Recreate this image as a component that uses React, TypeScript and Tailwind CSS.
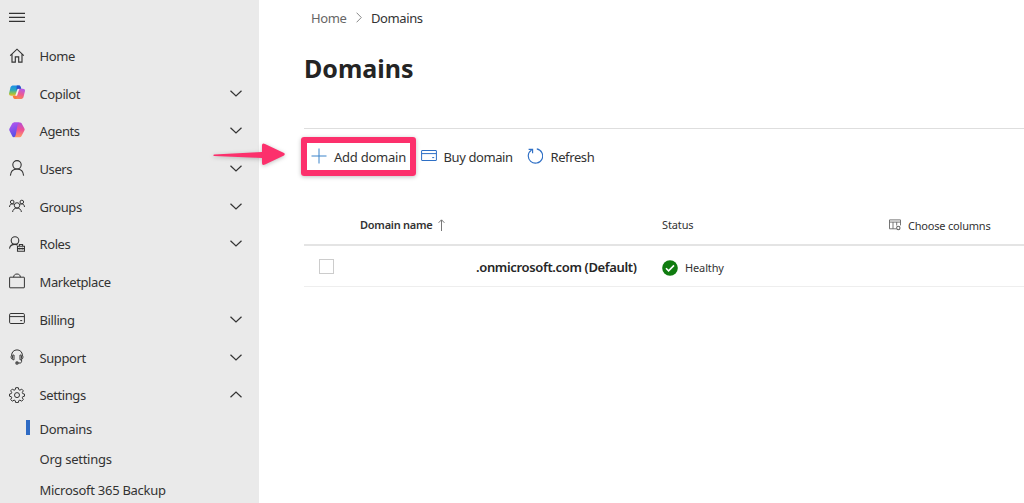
import type { ReactNode } from "react";

type IconProps = { children: ReactNode; className?: string; size?: number; box?: number };

function Icon({ children, className = "text-[#333333]", size = 16, box = 16 }: IconProps) {
  return (
    <svg
      width={size}
      height={size}
      viewBox={`0 0 ${box} ${box}`}
      fill="none"
      stroke="currentColor"
      strokeWidth="1"
      className={`shrink-0 ${className}`}
    >
      {children}
    </svg>
  );
}

const HomeIcon = () => (
  <Icon>
    <path d="M1.2 7.6 8 1.2l6.8 6.4M3 6.2v7.9h3.3V8.8h3.4v5.3H13V6.2" strokeWidth="1.15" />
  </Icon>
);

const CopilotIcon = () => (
  <Icon className="-mt-[2px]">
    <defs>
      <linearGradient id="cpA" x1="0.3" y1="0" x2="0.3" y2="1">
        <stop offset="0" stopColor="#1b8fe8" />
        <stop offset="0.4" stopColor="#27a6c4" />
        <stop offset="0.75" stopColor="#8fc54b" />
        <stop offset="1" stopColor="#f2b523" />
      </linearGradient>
      <linearGradient id="cpB" x1="0.7" y1="0" x2="0.3" y2="1">
        <stop offset="0" stopColor="#b45be8" />
        <stop offset="0.5" stopColor="#ee5a91" />
        <stop offset="1" stopColor="#fb8a4b" />
      </linearGradient>
    </defs>
    <path d="M4.6 .6h6L7.2 10.8H2.2C.2 10.8-.2 9.6.1 8L1.5 2.6C1.9 1.2 3 .6 4.6.6Z" fill="url(#cpA)" stroke="none" />
    <path d="M7.8.6h2.1c1.1 0 1.7.6 2 1.7l.4 1.7H8.7L7.4 5Z" fill="#2453c9" stroke="none" />
    <path d="M11.4 14h-6L8.8 3.8h5c2 0 2.4 1.2 2.1 2.8L14.5 12c-.4 1.4-1.5 2-3.1 2Z" fill="url(#cpB)" stroke="none" />
    <path d="M7.8 14H6.1c-1.1 0-1.7-.6-2-1.7l-.4-1.5h3.4Z" fill="#fb7a3c" stroke="none" />
    <path d="M8.6 4h1.7L8 10.8H6.2Z" fill="#f6f3f3" stroke="none" />
  </Icon>
);

const AgentsIcon = () => (
  <Icon className="-mt-[2px]">
    <defs>
      <linearGradient id="agA" x1="0.3" y1="0" x2="0.6" y2="1">
        <stop offset="0" stopColor="#b455ef" />
        <stop offset="1" stopColor="#4d50e8" />
      </linearGradient>
      <linearGradient id="agB" x1="0.5" y1="0" x2="0.5" y2="1">
        <stop offset="0" stopColor="#b34ed8" />
        <stop offset="0.5" stopColor="#ee5096" />
        <stop offset="1" stopColor="#ff9a62" />
      </linearGradient>
    </defs>
    <path d="M5 .4h6c.7 0 1.2.3 1.6.9l2.8 5.2c.4.7.4 1.4 0 2.1l-3 5.6c-.4.7-1 1-1.7 1H5.2Z" fill="url(#agB)" stroke="none" />
    <path d="M5 .4h5.6C9.3.7 8.8 2 8.5 3.3L6.8 12.6c-.3 1.6-.9 2.6-2.2 2.6-.6-.1-1-.5-1.3-1L.5 8.8C.1 8.1.1 7.1.5 6.4l2.9-5.1C3.8.7 4.3.4 5 .4Z" fill="url(#agA)" stroke="none" />
  </Icon>
);

const UserIcon = () => (
  <Icon className="-mt-[2px] text-[#333333]">
    <circle cx="8" cy="4.8" r="4.2" strokeWidth="1.1" />
    <path d="M1.4 15.6C1.7 11.6 4.4 9 8 9s6.3 2.6 6.6 6.6" strokeWidth="1.1" />
  </Icon>
);

const GroupIcon = () => (
  <Icon className="-mt-[1px] text-[#333333]">
    <circle cx="3.2" cy="4" r="1.8" />
    <circle cx="12.8" cy="4" r="1.8" />
    <circle cx="8" cy="7.4" r="2.7" />
    <path d="M.5 9c.1-1.9 1.1-3.1 2.7-3.1 1.1 0 1.8.4 2.3 1.1M15.5 9c-.1-1.9-1.1-3.1-2.7-3.1-1.1 0-1.8.4-2.3 1.1M3.6 14c.2-2.4 1.9-3.9 4.4-3.9s4.2 1.5 4.4 3.9" />
  </Icon>
);

const RolesIcon = () => (
  <Icon className="-mt-[1px] text-[#333333]">
    <circle cx="6" cy="4.6" r="3.8" strokeWidth="1.1" />
    <path d="M.5 12.6C.8 10.2 3 8.4 6 8.4c1 0 1.8.2 2.6.6" strokeWidth="1.1" />
    <path d="M8.5 10.3h7v5h-7zM10.4 10.1V8.5h3.2v1.6M8.5 12.6h7M10.6 11.8v1.7M13.4 11.8v1.7" strokeWidth="1.1" />
  </Icon>
);

const BagIcon = () => (
  <Icon className="-mt-[2px] text-[#333333]">
    <rect x=".6" y="4.2" width="14.8" height="10.6" rx=".4" />
    <path d="M4.6 4.2C4.8 2 6 1 8 1s3.2 1 3.4 3.2" />
  </Icon>
);

const CardIcon = ({ className = "-mt-[1px] text-[#333333]", rounded = 1.2 }: { className?: string; rounded?: number }) => (
  <Icon className={className}>
    <rect x=".6" y="2.5" width="14.8" height="10" rx={rounded} />
    <path d="M.6 5.6h14.8M11.2 9.6h2" />
  </Icon>
);

const HeadsetIcon = () => (
  <Icon className="-mt-[2px] text-[#333333]">
    <path d="M3.3 10.4C1.8 9.6 1.8 7.4 2.6 6.2 2.7 3 5 .9 8 .9s5.3 2.1 5.4 5.3c.8 1.2.8 3.4-.7 4.2M5 6v4.8c-1 0-1.6-.2-1.6-1.1V6.9C3.4 6.2 4 6 5 6ZM11 6v4.8c1 0 1.6-.2 1.6-1.1V6.9c0-.7-.6-.9-1.6-.9ZM12.6 10.4v2c0 .9-.6 1.6-1.4 1.6H9.2" />
    <circle cx="8" cy="14" r="1.1" strokeWidth="1.2" />
  </Icon>
);

const GearIcon = () => (
  <Icon className="-mt-[1px] text-[#333333]">
    <path d="m6.7.7-.5 2-1.1.5-1.8-1.1-1.6 1.7 1 1.7-.4 1.1-1.8.5v2.1l1.8.5.4 1.1-1 1.7 1.6 1.7 1.8-1.1 1.1.5.5 2h2.6l.5-2 1.1-.5 1.8 1.1 1.6-1.7-1-1.7.4-1.1 1.8-.5V7.1l-1.8-.5-.4-1.1 1-1.7-1.6-1.7-1.8 1.1-1.1-.5-.5-2Z" strokeLinejoin="round" />
    <circle cx="8" cy="8.1" r="2.5" />
  </Icon>
);

const Chevron = ({ up = false }: { up?: boolean }) => (
  <svg width="12" height="7" viewBox="0 0 12 7" fill="none" stroke="#333333" strokeWidth="1.2" className={`-mt-[1px] shrink-0 ${up ? "rotate-180" : ""}`}>
    <path d="M.5.7 6 6 11.5.7" />
  </svg>
);

const nav: { label: string; icon: ReactNode; state?: "closed" | "open" }[] = [
  { label: "Home", icon: <HomeIcon /> },
  { label: "Copilot", icon: <CopilotIcon />, state: "closed" },
  { label: "Agents", icon: <AgentsIcon />, state: "closed" },
  { label: "Users", icon: <UserIcon />, state: "closed" },
  { label: "Groups", icon: <GroupIcon />, state: "closed" },
  { label: "Roles", icon: <RolesIcon />, state: "closed" },
  { label: "Marketplace", icon: <BagIcon /> },
  { label: "Billing", icon: <CardIcon />, state: "closed" },
  { label: "Support", icon: <HeadsetIcon />, state: "closed" },
  { label: "Settings", icon: <GearIcon />, state: "open" },
];

const settings = ["Domains", "Org settings", "Microsoft 365 Backup"];

function Sidebar() {
  return (
    <nav className="h-full w-[259px] shrink-0 overflow-hidden bg-[#eaeaea]">
      <div className="flex h-[37px] items-start pt-[10px] pl-[9px]">
        <Icon>
          <path d="M0 3.4h16M0 7.4h16M0 11.4h16" strokeWidth="1.1" />
        </Icon>
      </div>
      {nav.map((item) => (
        <div key={item.label} className="flex h-[37.72px] items-center pr-[17px] pl-[9px]">
          {item.icon}
          <span className="ml-[14.5px] flex-1">{item.label}</span>
          {item.state && <Chevron up={item.state === "open"} />}
        </div>
      ))}
      {settings.map((label, i) => (
        <div key={label} className="flex h-[30.2px] items-center pl-[26px]">
          <span className={i === 0 ? "-mt-[3px] h-[15px] w-1 bg-[#2f6bc4]" : "w-1"} />
          <span className="ml-[9.5px] tracking-[-0.27px]">{label}</span>
        </div>
      ))}
    </nav>
  );
}

function Toolbar() {
  return (
    <div className="flex h-[56px] items-center border-t border-[#dedede]">
      <button className="relative flex items-center pl-[7px]">
        <Icon className="-mt-[1px] text-[#3b83ca]">
          <path d="M8 .5v15M.5 8h15" />
        </Icon>
        <span className="ml-[7px] w-[73px] text-left tracking-[-0.24px] whitespace-nowrap">Add domain</span>
        <span className="absolute -top-[11px] -left-[3px] h-[39px] w-[115px] rounded-[3px] border-6 border-[#fc306c] shadow-[0_1px_4px_rgba(0,0,0,0.25)]" />
      </button>
      <button className="ml-[14px] flex items-center">
        <CardIcon className="-mt-[1px] text-[#2e6fc5]" rounded={0.3} />
        <span className="ml-[6.5px] w-[70.5px] text-left whitespace-nowrap">Buy domain</span>
      </button>
      <button className="ml-[13px] flex items-center">
        <Icon className="-mt-[2px] text-[#2e6fc5]">
          <path d="M9.8.9a7.2 7.2 0 1 1-5.2 1M1.6 1.3h4v4" strokeWidth="1.15" />
        </Icon>
        <span className="ml-[7.5px] tracking-[-0.4px]">Refresh</span>
      </button>
    </div>
  );
}

function DomainTable() {
  return (
    <div className="mt-[21px] text-[11px] tracking-[-0.13px] text-[#333333]">
      <div className="flex h-[41px] items-center border-b-2 border-[#e4e4e4]">
        <div className="flex w-[358px] items-center pl-[56px] font-semibold">
          <span className="w-[73px] tracking-[-0.25px] whitespace-nowrap">Domain name</span>
          <svg width="7" height="12" viewBox="0 0 7 12" fill="none" stroke="#777777" className="ml-[5px]">
            <path d="M3.5 12V1M.6 3.8l2.9-3 2.9 3" />
          </svg>
        </div>
        <div className="w-[227px]">Status</div>
        <div className="flex items-center">
          <Icon size={12} box={12} className="text-[#666666]">
            <path d="M7 9.8H.5V.9h11v5.5M.5 3.1h11M4 3.1v6.7M7.7 3.1v3.5" strokeWidth=".9" />
            <circle cx="9.3" cy="9" r="1.7" strokeWidth="1.1" />
          </Icon>
          <span className="ml-[7px] pt-[2px] tracking-[-0.2px]">Choose columns</span>
        </div>
      </div>
      <div className="flex h-[41px] items-center border-b border-[#eeeeee]">
        <div className="flex w-[358px] items-center pl-[15px]">
          <span className="size-[15px] border border-[#cccccc] bg-white" />
          <span className="ml-[142px] pt-[2px] text-[13px] font-semibold tracking-[-0.35px] whitespace-nowrap text-[#262626]">.onmicrosoft.com (Default)</span>
        </div>
        <Icon size={16} className="mt-[3px] text-white">
          <circle cx="8" cy="8" r="7.8" fill="#107c10" stroke="none" />
          <path d="m4 8.2 2.6 2.6L12 5.4" strokeWidth="1.6" />
        </Icon>
        <span className="ml-[7px] pt-[3px]">Healthy</span>
      </div>
    </div>
  );
}

export default function App() {
  return (
    <div className="relative flex h-[503px] w-[1024px] overflow-hidden bg-white font-['Noto_Sans','Open_Sans',sans-serif] text-[13px] leading-[18px] tracking-[-0.4px] text-[#333333]">
      <Sidebar />
      <main className="min-w-0 flex-1 pl-[45px]">
        <div className="flex items-center pt-[9px] pl-[7px]">
          <span className="w-[36px] text-[#666666]">Home</span>
          <svg width="6" height="11" viewBox="0 0 6 11" fill="none" stroke="#888888" className="-mt-[1px] mr-[9px] ml-[9px]">
            <path d="M.6.7 5.3 5.5.6 10.3" />
          </svg>
          <span>Domains</span>
        </div>
        <h1 className="mt-[23px] h-[78px] text-[25px] leading-[36px] font-bold tracking-normal text-[#242424]">Domains</h1>
        <Toolbar />
        <DomainTable />
      </main>
      <svg width="76" height="30" viewBox="0 0 76 30" className="absolute top-[140px] left-[210px] drop-shadow-[0_1px_2px_rgba(0,0,0,0.25)]">
        <path d="M4 14.4 52 12V5.6q0-3 3-1.5L74 13q1.5 1.2 0 2.4L55 24.6q-3 1.4-3-1.5V18L4 15.9q-1.5-.7 0-1.5Z" fill="#fc306c" />
      </svg>
    </div>
  );
}
